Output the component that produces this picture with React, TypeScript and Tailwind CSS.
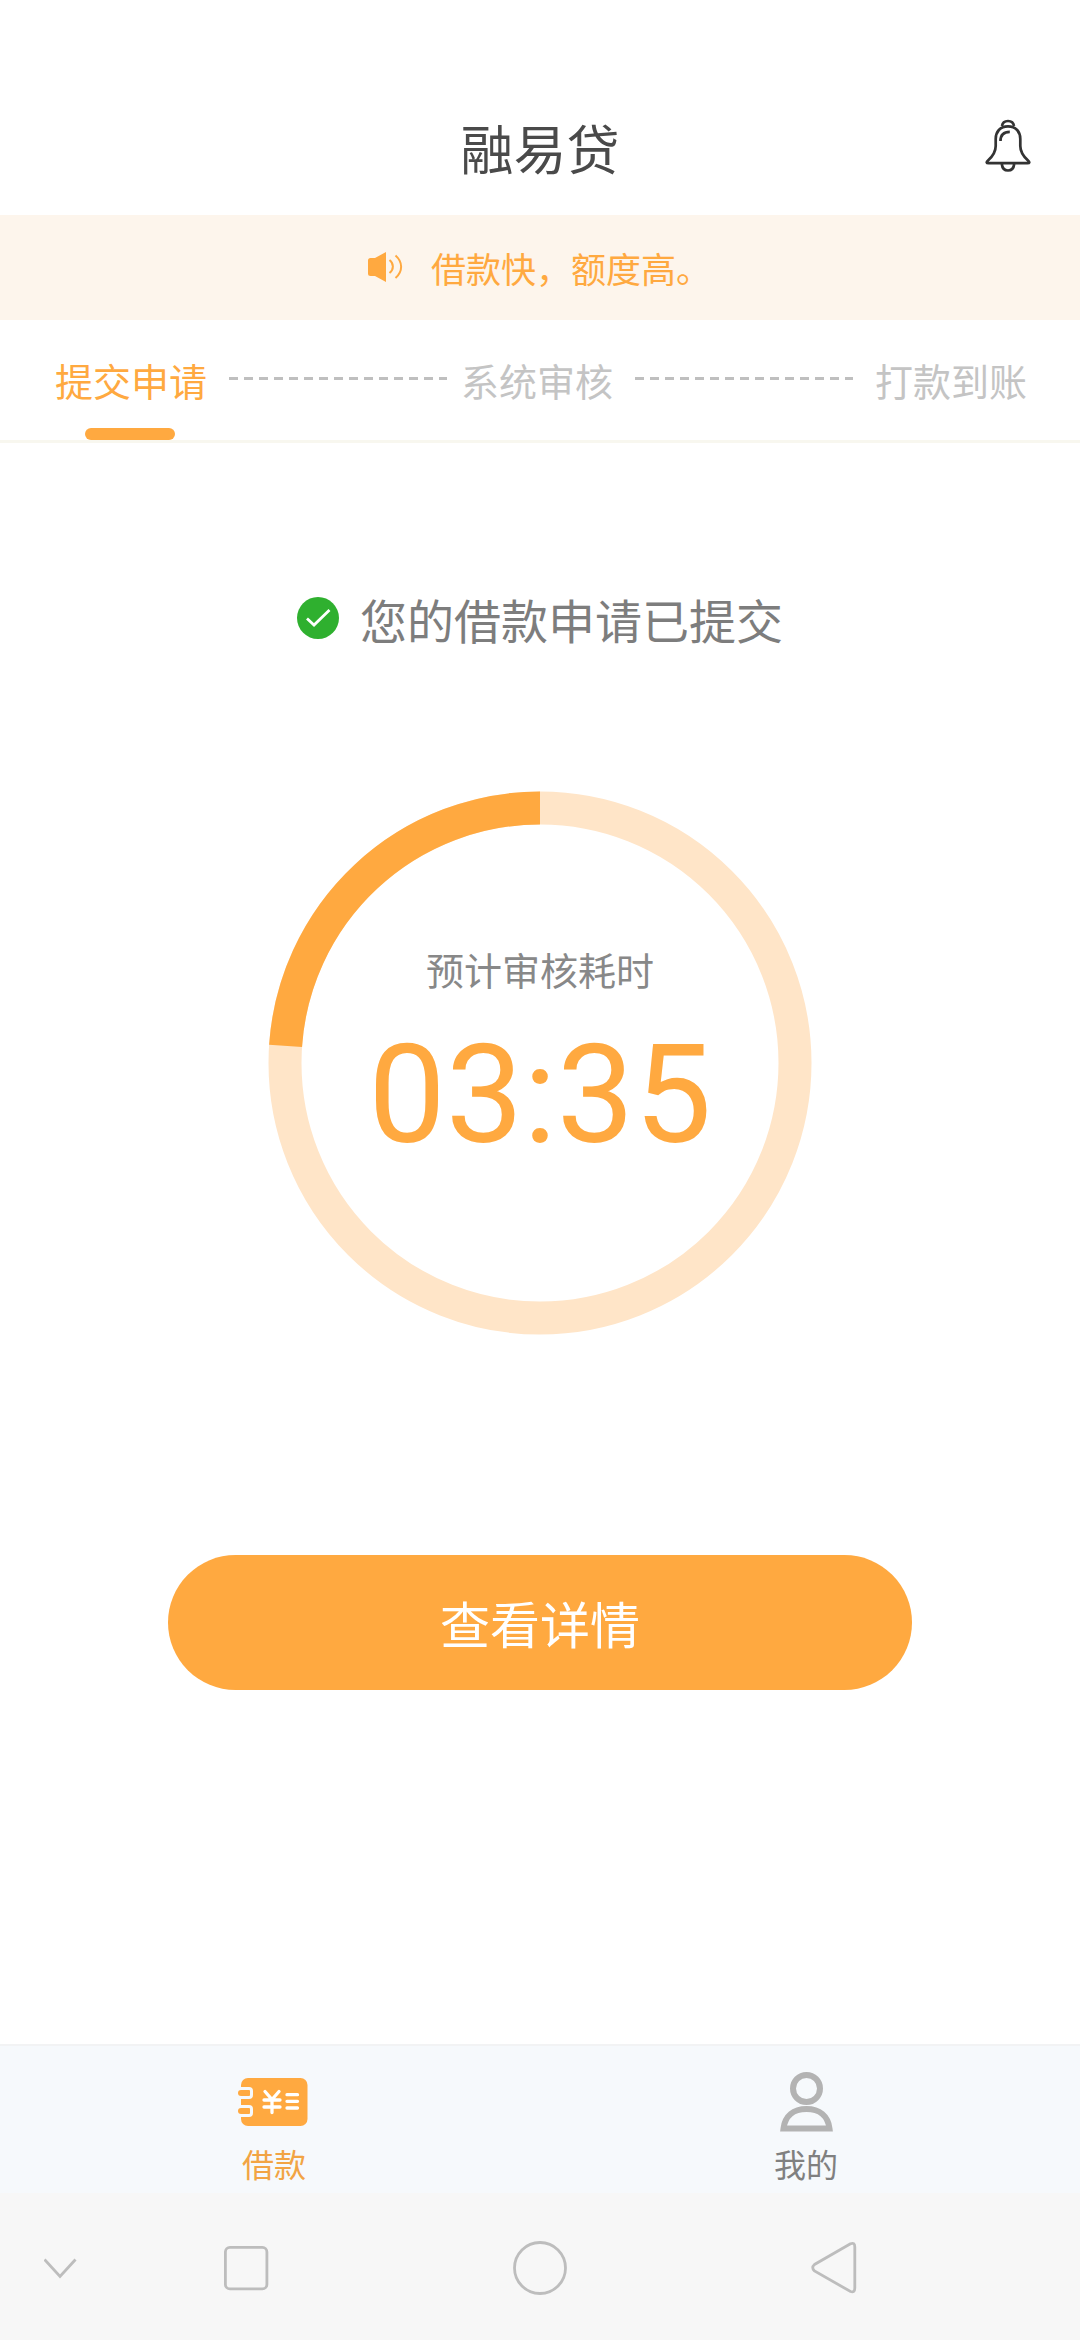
import type { JSX, ReactNode } from 'react'

const RING_RADIUS = 255
const RING_LENGTH = 2 * Math.PI * RING_RADIUS
const RING_PROGRESS = 86.1 / 360

function BellIcon(): JSX.Element {
  return (
    <svg className="w-[46px] h-[54px]" viewBox="0 0 46 54" fill="none" stroke="#333333" strokeWidth="2.7">
      <path d="M17 7C17.500 3.500 20 2 23 2C26 2 28.500 3.500 29 7" />
      <path d="M23 7.300C15 7.300 10.700 13 10.700 20V27C10.700 33 7.500 37.500 3 41.500C1 43.300 1.500 44.200 3.500 44.200H42.500C44.500 44.200 45 43.300 43 41.500C38.500 37.500 35.300 33 35.300 27V20C35.300 13 31 7.300 23 7.300Z" />
      <path d="M15.500 22C15.500 16 19 12.800 24.800 12.800" />
      <path d="M16.800 45C17.300 49.500 19.500 51.500 23 51.500C26.500 51.500 28.700 49.500 29.200 45" />
    </svg>
  )
}

function SpeakerIcon(): JSX.Element {
  return (
    <svg className="w-[35px] h-[32px] mb-0.5 shrink-0" viewBox="0 0 35 32" fill="none" stroke="#ffa940" strokeWidth="2">
      <path d="M2.500 7H7L18 1V31L7 25H2.500Q0 25 0 22.500V9.500Q0 7 2.500 7Z" fill="#ffa940" stroke="none" />
      <path d="M21.500 9C26 12.500 26 18.500 21.500 22" />
      <path d="M27.500 4.500C35 11 35 20.500 27.500 27" />
    </svg>
  )
}

function LoanIcon(): JSX.Element {
  return (
    <svg className="w-[70px] h-[48px] mr-[3px]" viewBox="0 0 70 48" fill="none" strokeLinecap="round">
      <rect x="3" y="0" width="66.500" height="48" rx="7" fill="#ffa940" />
      <g stroke="#f6f9fc" strokeWidth="3">
        <path d="M0 10.500H11Q13.500 10.500 13.500 13V17Q13.500 19.500 11 19.500H0" />
        <path d="M0 28.500H11Q13.500 28.500 13.500 31V35Q13.500 37.500 11 37.500H0" />
      </g>
      <rect x="0" y="12" width="12" height="6" rx="3" fill="#ffa940" />
      <rect x="0" y="30" width="12" height="6" rx="3" fill="#ffa940" />
      <g stroke="#ffffff" strokeWidth="3.300">
        <path d="M27 13.500L34 21.500L41 13.500M34 21.500V34.500M26 22H42M26 29H42" />
        <path d="M49 16.700H59.500M49 23.300H59.500M49 30H59.500" />
      </g>
    </svg>
  )
}

function UserIcon(): JSX.Element {
  return (
    <svg className="w-[53px] h-[60px]" viewBox="0 0 53 60" fill="none" stroke="#b3b3b3" strokeWidth="6">
      <circle cx="26.500" cy="16.500" r="13.500" />
      <path d="M3.500 56.500C5 44 13.500 37 26.500 37C39.500 37 48 44 49.500 56.500Z" />
    </svg>
  )
}

function Step({ label, active = false }: { label: string; active?: boolean }): JSX.Element {
  return (
    <div className="relative h-full flex items-center justify-center w-[152px] shrink-0 whitespace-nowrap">
      <span className={active ? 'text-[#ffa940]' : 'text-[#c4c4c4]'}>{label}</span>
      {active && <div className="absolute bottom-0 left-[30px] w-[90px] h-3 rounded-full bg-[#ffa940]" />}
    </div>
  )
}

function Dashes(): JSX.Element {
  return (
    <div className="w-[218px] h-[3px] mb-[3px] bg-[repeating-linear-gradient(90deg,#bfbfbf_0_9px,transparent_9px_15px)]" />
  )
}

function TabItem({ label, className, children }: { label: string; className: string; children: ReactNode }): JSX.Element {
  return (
    <div className={`flex-1 flex flex-col items-center ${className}`}>
      <div className="h-[60px] flex items-center">{children}</div>
      <span className="mt-[9px] text-[32px] leading-[44px]">{label}</span>
    </div>
  )
}

export default function App(): JSX.Element {
  return (
    <div className="w-[1080px] h-[2340px] flex flex-col bg-white overflow-hidden font-['Noto_Sans_CJK_SC','Noto_Sans',sans-serif]">
      <header className="h-[215px] pt-[84px] grid grid-cols-[1fr_auto_1fr] items-center">
        <h1 className="col-start-2 pb-1 text-[53px] leading-[127px] text-[#4a4a4a]">融易贷</h1>
        <div className="justify-self-end mr-[49px] mb-2">
          <BellIcon />
        </div>
      </header>

      <div className="h-[105px] pl-[368px] flex items-center bg-[#fdf5ec] text-[#ffa940]">
        <SpeakerIcon />
        <p className="ml-[28px] text-[35px] leading-[50px]">借款快，额度高。</p>
      </div>

      <div className="h-[123px] pl-[55px] flex items-center text-[38px] leading-[50px] border-b-3 border-[#f8f7ef]">
        <Step label="提交申请" active />
        <div className="ml-[22px] mr-[14px]">
          <Dashes />
        </div>
        <Step label="系统审核" />
        <div className="ml-[22px] mr-[22px]">
          <Dashes />
        </div>
        <Step label="打款到账" />
      </div>

      <main className="flex-1 flex flex-col items-center">
        <div className="mt-[144px] flex items-center">
          <svg className="w-[42px] h-[42px] mb-0.5" viewBox="0 0 42 42">
            <circle cx="21" cy="21" r="21" fill="#2fb02f" />
            <path d="M10 21.500L17 28L32.500 13" fill="none" stroke="#ffffff" strokeWidth="2.800" />
          </svg>
          <p className="ml-[21px] text-[47px] leading-[64px] text-[#7d7d7d]">您的借款申请已提交</p>
        </div>

        <div className="mt-[140px] grid w-[544px] h-[544px]">
          <svg className="col-start-1 row-start-1" viewBox="0 0 544 544" fill="none" strokeWidth="33">
            <circle cx="272" cy="272" r={RING_RADIUS} stroke="#ffe5c8" />
            <circle
              cx="272"
              cy="272"
              r={RING_RADIUS}
              stroke="#ffa940"
              strokeDasharray={`${RING_LENGTH * RING_PROGRESS} ${RING_LENGTH}`}
              transform="matrix(0 -1 -1 0 544 544)"
            />
          </svg>
          <div className="col-start-1 row-start-1 flex flex-col items-center pt-[153px]">
            <span className="text-[38px] leading-[50px] text-[#888888]">预计审核耗时</span>
            <span className="mt-[21px] text-[138px] leading-[160px] text-[#ffa940] font-[Roboto,sans-serif]">03:35</span>
          </div>
        </div>

        <button className="mt-[220px] w-[744px] h-[135px] rounded-full bg-[#ffa940] text-[50px] text-white">查看详情</button>
      </main>

      <nav className="h-[149px] px-2 pt-[26px] flex bg-[#f6f9fc] border-t-2 border-[#f2f3f4]">
        <TabItem label="借款" className="text-[#f2a444]">
          <LoanIcon />
        </TabItem>
        <TabItem label="我的" className="text-[#808080]">
          <UserIcon />
        </TabItem>
      </nav>

      <div className="h-[147px] pl-11 bg-[#f7f7f7]">
        <svg className="w-[820px] h-full" viewBox="44 2193 820 147" fill="none" stroke="#bdbdbd" strokeWidth="2.800">
          <path d="M44.500 2259.500L60 2276.500L75.500 2259.500" />
          <rect x="225.400" y="2247.400" width="41.500" height="41.500" rx="4.500" />
          <circle cx="540" cy="2268" r="25.500" />
          <path d="M850.500 2243.800L814.500 2264.500Q811 2267.500 814.500 2271L850.500 2291.500Q854.800 2293 854.800 2288V2247Q854.800 2242 850.500 2243.800Z" />
        </svg>
      </div>
    </div>
  )
}
